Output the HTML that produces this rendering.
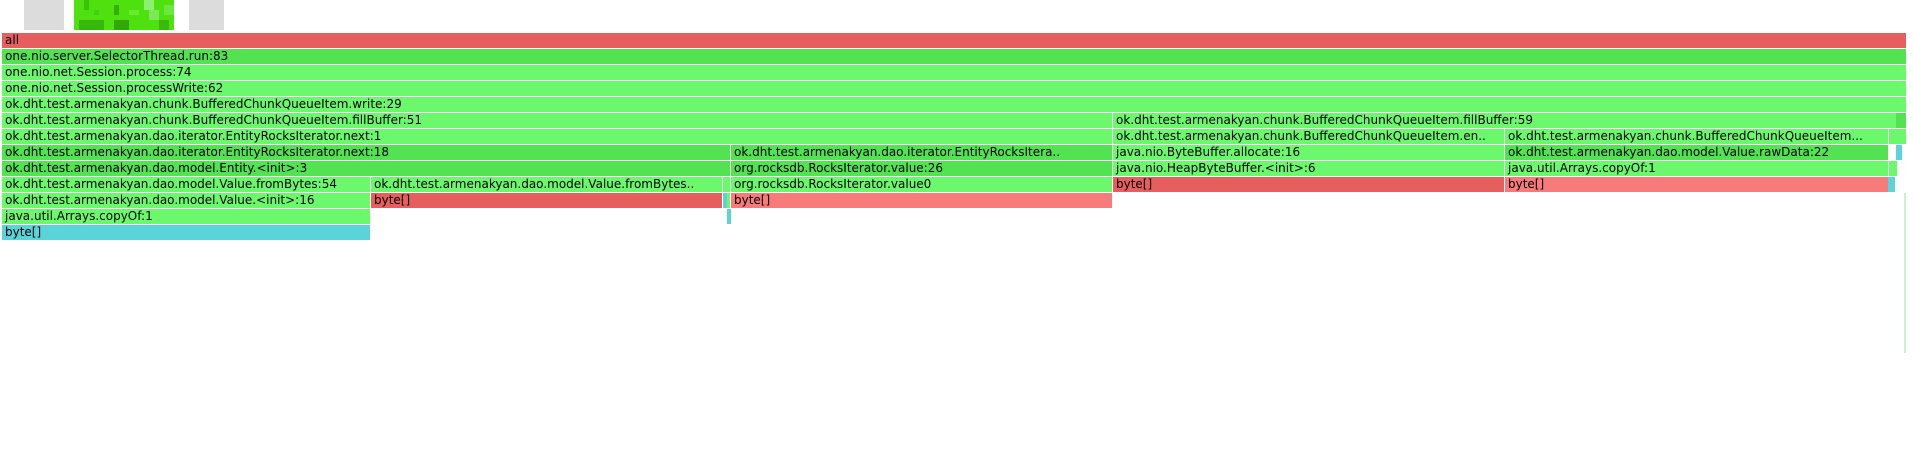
<!DOCTYPE html>
<html><head><meta charset="utf-8"><style>
body{margin:0;width:1914px;height:455px;background:#fff;position:relative;overflow:hidden;font-family:"DejaVu Sans","Liberation Sans",sans-serif;font-size:12px}
.f{position:absolute;height:15px;line-height:15px;white-space:nowrap;overflow:hidden;padding-left:3px;box-sizing:border-box;color:#000}
.g{background:#6cf86c}.d{background:#52e252}.r{background:#e65e5e}.lr{background:#f77b7b}.c{background:#5ad4d8}
.sq{position:absolute;top:0;height:30px;background:#dcdcdc}
</style></head><body>
<div class="sq" style="left:24px;width:40px"></div>
<div class="sq" style="left:189px;width:35px"></div>
<svg style="position:absolute;left:74px;top:0" width="100" height="30">
<rect width="100" height="30" fill="#4fe010"/>
<rect x="10" y="0" width="5" height="10" fill="#3cc00c"/><rect x="40" y="5" width="5" height="10" fill="#35b00a"/>
<rect x="70" y="0" width="10" height="10" fill="#8ef070"/><rect x="75" y="10" width="10" height="10" fill="#7ae858"/>
<rect x="5" y="20" width="25" height="10" fill="#36b80c"/><rect x="40" y="20" width="15" height="10" fill="#2fa808"/>
<rect x="85" y="20" width="10" height="10" fill="#3ab80c"/><rect x="20" y="10" width="5" height="5" fill="#44d010"/>
<rect x="55" y="10" width="10" height="5" fill="#66ec30"/><rect x="90" y="5" width="10" height="10" fill="#6ae840"/>
</svg>
<div class="f r" style="left:2px;top:33px;width:1904px">all</div>
<div class="f d" style="left:2px;top:49px;width:1904px">one.nio.server.SelectorThread.run:83</div>
<div class="f g" style="left:2px;top:65px;width:1904px">one.nio.net.Session.process:74</div>
<div class="f g" style="left:2px;top:81px;width:1904px">one.nio.net.Session.processWrite:62</div>
<div class="f g" style="left:2px;top:97px;width:1904px">ok.dht.test.armenakyan.chunk.BufferedChunkQueueItem.write:29</div>
<div class="f g" style="left:2px;top:113px;width:1110px">ok.dht.test.armenakyan.chunk.BufferedChunkQueueItem.fillBuffer:51</div>
<div class="f g" style="left:1113px;top:113px;width:783px">ok.dht.test.armenakyan.chunk.BufferedChunkQueueItem.fillBuffer:59</div>
<div class="f d" style="left:1896px;top:113px;width:10px"></div>
<div class="f g" style="left:2px;top:129px;width:1110px">ok.dht.test.armenakyan.dao.iterator.EntityRocksIterator.next:1</div>
<div class="f g" style="left:1113px;top:129px;width:391px">ok.dht.test.armenakyan.chunk.BufferedChunkQueueItem.en..</div>
<div class="f g" style="left:1505px;top:129px;width:383px">ok.dht.test.armenakyan.chunk.BufferedChunkQueueItem...</div>
<div class="f g" style="left:1889px;top:129px;width:17px"></div>
<div class="f d" style="left:2px;top:145px;width:728px">ok.dht.test.armenakyan.dao.iterator.EntityRocksIterator.next:18</div>
<div class="f d" style="left:731px;top:145px;width:381px">ok.dht.test.armenakyan.dao.iterator.EntityRocksItera..</div>
<div class="f g" style="left:1113px;top:145px;width:391px">java.nio.ByteBuffer.allocate:16</div>
<div class="f d" style="left:1505px;top:145px;width:383px">ok.dht.test.armenakyan.dao.model.Value.rawData:22</div>
<div class="f c" style="left:1896px;top:145px;width:6px"></div>
<div class="f d" style="left:2px;top:161px;width:728px">ok.dht.test.armenakyan.dao.model.Entity.&lt;init&gt;:3</div>
<div class="f d" style="left:731px;top:161px;width:381px">org.rocksdb.RocksIterator.value:26</div>
<div class="f g" style="left:1113px;top:161px;width:391px">java.nio.HeapByteBuffer.&lt;init&gt;:6</div>
<div class="f g" style="left:1505px;top:161px;width:383px">java.util.Arrays.copyOf:1</div>
<div class="f g" style="left:1889px;top:161px;width:8px"></div>
<div class="f g" style="left:2px;top:177px;width:368px">ok.dht.test.armenakyan.dao.model.Value.fromBytes:54</div>
<div class="f g" style="left:371px;top:177px;width:351px">ok.dht.test.armenakyan.dao.model.Value.fromBytes..</div>
<div class="f g" style="left:723px;top:177px;width:7px"></div>
<div class="f g" style="left:731px;top:177px;width:381px">org.rocksdb.RocksIterator.value0</div>
<div class="f r" style="left:1113px;top:177px;width:391px">byte[]</div>
<div class="f lr" style="left:1505px;top:177px;width:383px">byte[]</div>
<div class="f c" style="left:1888px;top:177px;width:7px"></div>
<div class="f g" style="left:2px;top:193px;width:368px">ok.dht.test.armenakyan.dao.model.Value.&lt;init&gt;:16</div>
<div class="f r" style="left:371px;top:193px;width:351px">byte[]</div>
<div class="f c" style="left:723px;top:193px;width:4px"></div>
<div class="f g" style="left:727px;top:193px;width:3px"></div>
<div class="f lr" style="left:731px;top:193px;width:381px">byte[]</div>
<div class="f g" style="left:2px;top:209px;width:368px">java.util.Arrays.copyOf:1</div>
<div class="f c" style="left:727px;top:209px;width:4px"></div>
<div class="f c" style="left:2px;top:225px;width:368px">byte[]</div>
<div style="position:absolute;left:1904px;top:193px;width:2px;height:160px;background:#c8f4c8"></div>
</body></html>
